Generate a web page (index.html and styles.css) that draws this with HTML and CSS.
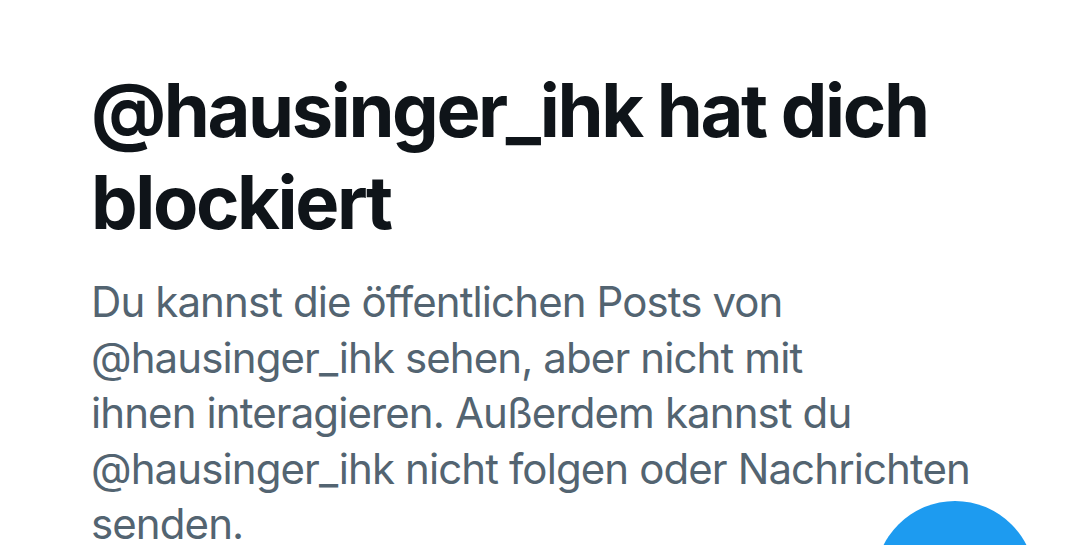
FILE: index.html
```html
<!DOCTYPE html>
<html lang="de">
<head>
  <meta charset="UTF-8">
  <title>Blockiert</title>
  <link rel="stylesheet" href="styles.css">
</head>
<body>
  <div class="screen">
    <h1 class="title">@hausinger_ihk hat dich<br>blockiert</h1>
    <p class="message">Du kannst die öffentlichen Posts von<br>@hausinger_ihk sehen, aber nicht mit<br>ihnen interagieren. Außerdem kannst du<br>@hausinger_ihk nicht folgen oder Nachrichten<br>senden.</p>
    <div class="fab"></div>
  </div>
</body>
</html>
```

FILE: styles.css
```css
* { box-sizing: border-box; }
html, body {
  margin: 0;
  height: 100%;
  overflow: hidden;
  background: #fff;
}
body {
  font-family: Inter, "Noto Sans", "Liberation Sans", sans-serif;
}
.screen {
  position: relative;
  height: 545px;
  overflow: hidden;
  padding: 64px 0 0 91px;
}
.title {
  margin: 0;
  font-size: 74px;
  font-weight: 700;
  line-height: 92px;
  color: #0f1419;
  letter-spacing: -2.4px;
}
.message {
  margin: 26px 0 0;
  font-size: 42px;
  font-weight: 400;
  line-height: 55.5px;
  color: #536471;
  letter-spacing: -0.9px;
}
.fab {
  position: absolute;
  left: 875px;
  top: 501px;
  width: 160px;
  height: 160px;
  border-radius: 50%;
  background: #1d9bf0;
}
```
